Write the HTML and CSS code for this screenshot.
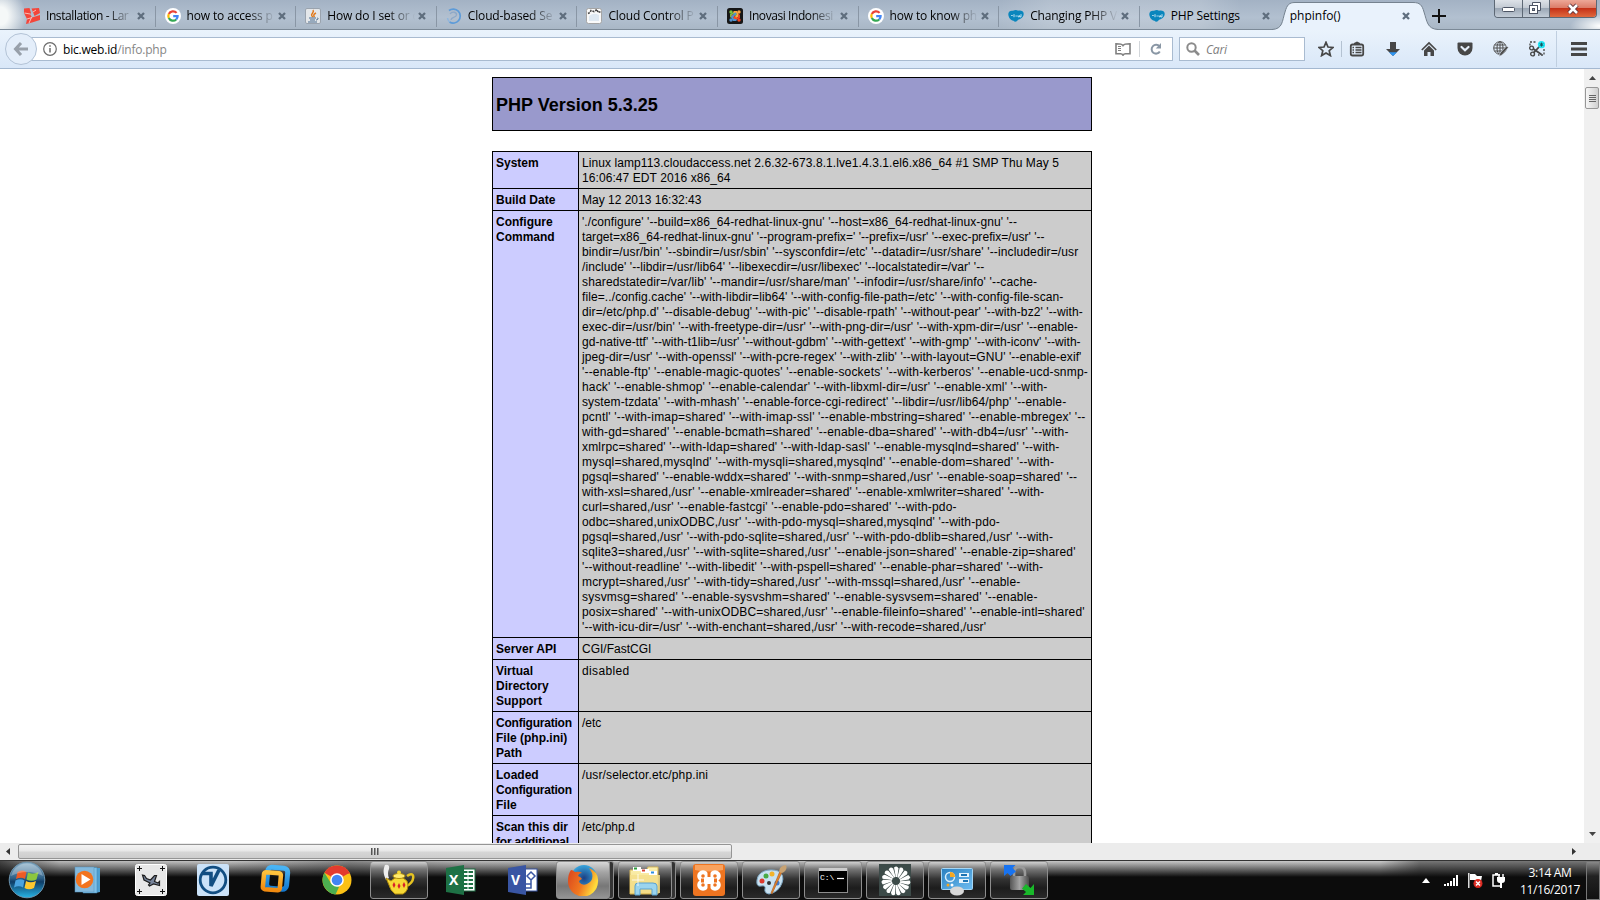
FILE: index.html
```html
<!DOCTYPE html>
<html lang="id">
<head>
<meta charset="utf-8">
<title>phpinfo()</title>
<link rel="stylesheet" href="styles.css">
</head>
<body>
<svg class="defs" width="0" height="0">
  <defs>
    <symbol id="google" viewBox="0 0 16 16"><circle cx="8" cy="8" r="8" fill="#fff"/><g fill="none" stroke-width="2.200"><path d="M3.800 6A4.700 4.700 0 0 1 11.600 4.900" stroke="#ea4335"/><path d="M3.800 6a4.700 4.700 0 0 0 0 4" stroke="#fbbc05"/><path d="M3.800 10a4.700 4.700 0 0 0 7.400 1.500" stroke="#34a853"/><path d="M11.200 11.500A4.700 4.700 0 0 0 12.600 8.200H8.200" stroke="#4285f4"/></g></symbol>
    <symbol id="cloud" viewBox="0 0 16 16"><path d="M.3 6C.3 3.200 3 2.200 5 2.800c2-1.200 4-1 5 0 2.500-.8 5.700.2 5.700 3 0 3.400-3 5.400-5.700 5.900C9 13.500 7 14.500 5.500 12.800 2.500 12.200.3 9.300.3 6z" fill="#0a86bd"/><path d="M3.200 7.500h1.500M6 6.200v3M7.500 8h1.300M10 7.300v1.500h1.500V7.300M13 6.200v2.700h-1" stroke="#d8eff9" stroke-width=".9" fill="none"/></symbol>
    <symbol id="x" viewBox="0 0 8 8"><path d="M1 1l6 6M7 1L1 7" stroke="#5f6e7e" stroke-width="2.300"/></symbol>
    <linearGradient id="orb" x2="0" y2="1"><stop offset="0" stop-color="#8fb4cc"/><stop offset=".45" stop-color="#2d5f86"/><stop offset=".55" stop-color="#0f3c66"/><stop offset="1" stop-color="#27b5e6"/></linearGradient>
    <linearGradient id="vm" x2="0" y2="1"><stop offset="0" stop-color="#49b4f5"/><stop offset="1" stop-color="#1379cf"/></linearGradient>
    <linearGradient id="org" x2="0" y2="1"><stop offset="0" stop-color="#ffc23c"/><stop offset="1" stop-color="#f08a10"/></linearGradient>
    <radialGradient id="fx"><stop offset="0" stop-color="#1c3f83"/><stop offset="1" stop-color="#37a4dc"/></radialGradient>
    <linearGradient id="fox" x2="1" y2=".4"><stop offset="0" stop-color="#d9411e"/><stop offset=".6" stop-color="#f07a20"/><stop offset="1" stop-color="#ffdb3c"/></linearGradient>
    <linearGradient id="fold" x2="0" y2="1"><stop offset="0" stop-color="#fdf3b4"/><stop offset="1" stop-color="#edcf6b"/></linearGradient>
    <linearGradient id="panel" x2="1" y2="1"><stop offset="0" stop-color="#2a80c0"/><stop offset="1" stop-color="#6ebcf0"/></linearGradient>
    <linearGradient id="steel"><stop offset="0" stop-color="#555"/><stop offset=".5" stop-color="#a5a5a5"/><stop offset="1" stop-color="#4c4c4c"/></linearGradient>
  </defs>
</svg>

<header class="tabstrip">
  <div class="tab tight"><svg class="fav" viewBox="0 0 16 16"><path d="M0 .5L5.500 0 7 5l-1 1 2 3.500L16 7v5l-8 2.500L2 16l1-5L0 5z M7.500.5L15 0l1 5-5.500 3z" fill="#f4453a"/><path d="M.5 5l5.500 1M3 11l5-1.500M7.500 9.500L5 15M9 4l3-2" stroke="#ffd9d3" fill="none" stroke-width=".8"/></svg><span class="label">Installation - Lar</span><svg class="close"><use href="#x"/></svg></div>
  <div class="tab"><svg class="fav"><use href="#google"/></svg><span class="label">how to access p</span><svg class="close"><use href="#x"/></svg></div>
  <div class="tab"><svg class="fav" viewBox="0 0 16 16"><rect x=".5" y=".5" width="15" height="15" rx="1.500" fill="#e4e7ea" stroke="#9aa3ae"/><path d="M8 9c-4-3 2-4 0-7M9.500 9C8 7 9 6 11 5" stroke="#e07a1e" stroke-width="1.500" fill="none"/><path d="M4 10h7M5 12h5M3 14h9M12 10c2 0 1 2-1 2" stroke="#4b6d8f" fill="none"/></svg><span class="label">How do I set or c</span><svg class="close"><use href="#x"/></svg></div>
  <div class="tab"><svg class="fav" viewBox="0 0 16 16"><g fill="none"><path d="M3 2.500a7 7 0 1 1 .5 11.500" stroke="#5d9bd8" stroke-width="1.700"/><path d="M3.500 14a7 7 0 0 1-2-4" stroke="#8fb6de" stroke-width="1.500"/><path d="M4 6c2-3 7-2 6.500 1S5 9 5 12" stroke="#8ea9c8" stroke-width="1.300"/></g></svg><span class="label">Cloud-based Se</span><svg class="close"><use href="#x"/></svg></div>
  <div class="tab"><svg class="fav" viewBox="0 0 16 16"><rect x=".5" y=".5" width="15" height="15" rx="2" fill="#fafafa" stroke="#a5a5a5"/><path d="M2 5.500l2-1 1-2 3 1 3-2 1 3 3-1" stroke="#444" stroke-dasharray="2 1" stroke-width="1.600" fill="none"/><path d="M3 8q5-4 10-1v6H3z" fill="#dfe9f2"/></svg><span class="label">Cloud Control P</span><svg class="close"><use href="#x"/></svg></div>
  <div class="tab tight"><svg class="fav" viewBox="0 0 16 16"><rect width="16" height="16" rx="2.500" fill="#161616"/><g fill="none" stroke-width="1.900"><path d="M4 9.500V6.500L7 5l4 4" stroke="#7ac143"/><path d="M6.500 4h3L11 7l-4 4" stroke="#f9a541"/><path d="M12 6.500v3L9 11 5 7" stroke="#f44321"/><path d="M9.500 12h-3L5 9l4-4" stroke="#5091cd"/></g><circle cx="4" cy="4" r="1.700" fill="#7ac143"/><circle cx="12" cy="4" r="1.700" fill="#f9a541"/><circle cx="12" cy="12" r="1.700" fill="#f44321"/><circle cx="4" cy="12" r="1.700" fill="#5091cd"/></svg><span class="label">Inovasi Indonesi</span><svg class="close"><use href="#x"/></svg></div>
  <div class="tab"><svg class="fav"><use href="#google"/></svg><span class="label">how to know ph</span><svg class="close"><use href="#x"/></svg></div>
  <div class="tab"><svg class="fav"><use href="#cloud"/></svg><span class="label">Changing PHP V</span><svg class="close"><use href="#x"/></svg></div>
  <div class="tab last"><svg class="fav"><use href="#cloud"/></svg><span class="label">PHP Settings</span><svg class="close"><use href="#x"/></svg></div>
  <div class="tab active">
    <svg class="shape" viewBox="0 0 166 30"><path d="M0 29.500C11 29 10 21 13 12 15 5 17 2.500 23 2.500H141C148 2.500 150 5 152 12 155 21 155 29 166 29.500V31H0z" fill="#e9f2fc" stroke="#75828f"/></svg>
    <span class="label">phpinfo()</span><svg class="close"><use href="#x"/></svg>
  </div>
  <svg class="plus" viewBox="0 0 14 14"><path d="M7 0v14M0 7h14" stroke="#111" stroke-width="2"/></svg>
  <div class="winbtns">
    <span class="wb min"><svg width="13" height="6"><rect x=".5" y=".5" width="12" height="4" rx="1" fill="#fff" stroke="#4d5565"/></svg></span>
    <span class="wb max"><svg width="13" height="13"><path d="M3.500 3V.5h8v8H9" fill="#fff" stroke="#4d5565"/><rect x=".5" y="3.500" width="8" height="8" fill="#fff" stroke="#4d5565"/><rect x="3.500" y="6.500" width="2" height="2" fill="#9aa5b3" stroke="#4d5565"/></svg></span>
    <span class="wb cls"><svg width="13" height="12"><path d="M2 2l8 8M10 2L2 10" stroke="#5b3038" stroke-width="4.500"/><path d="M2 2l8 8M10 2L2 10" stroke="#fff" stroke-width="2.600"/></svg></span>
  </div>
</header>

<nav class="toolbar">
  <span class="back"><svg width="16" height="14"><path d="M8 1L2.500 7 8 13M3 7h12" stroke="#98a0aa" stroke-width="3" fill="none"/></svg></span>
  <div class="urlbar">
    <svg class="info" viewBox="0 0 14 14"><circle cx="7" cy="7" r="6.300" fill="none" stroke="#6b6b6b" stroke-width="1.200"/><path d="M7 6v4.500M7 3.200v1.600" stroke="#6b6b6b" stroke-width="1.500"/></svg>
    <span class="url">bic.web.id<span class="path">/info.php</span></span>
    <svg class="reader" viewBox="0 0 16 13"><path d="M8 2.500C7 1 5 .8 1 .8v10h4.500c1.300 0 2 .3 2.500 1.500.5-1.200 1.200-1.500 2.500-1.500H15V.8C11 .8 9 1 8 2.500z" fill="none" stroke="#7f7f7f" stroke-width="1.600"/><path d="M3 3.500h3M3 5.500h3M3 7.500h3" stroke="#7f7f7f"/></svg>
    <span class="usep"></span>
    <svg class="reload" viewBox="0 0 12 12"><path d="M9.500 3.500A4.400 4.400 0 1 0 9.800 8.500" fill="none" stroke="#8a97a5" stroke-width="2"/><path d="M11 0v5.500H5.800z" fill="#8a97a5"/></svg>
  </div>
  <div class="search"><svg width="14" height="14"><circle cx="5.500" cy="5.500" r="4.200" fill="none" stroke="#8b8b8b" stroke-width="2"/><path d="M8.500 8.500l4.500 4.500" stroke="#8b8b8b" stroke-width="2.600"/></svg><span>Cari</span></div>
  <div class="tools">
    <svg viewBox="0 0 16 16"><path d="M8 1.300l2 4.700 5 .4-3.800 3.300 1.200 4.900L8 12l-4.400 2.600 1.200-4.900L1 6.400 6 6z" fill="none" stroke="#474747" stroke-width="1.700"/></svg>
    <i class="tsep"></i>
    <svg viewBox="0 0 16 16"><rect x="1.800" y="3.500" width="12.400" height="11" rx="1.800" fill="none" stroke="#474747" stroke-width="1.800"/><path d="M5 3V2l3-1.500L11 2v1z" fill="#474747"/><path d="M3.500 6.500h1.500M6.500 6.500h6M3.500 9h1.500M6.500 9h6M3.500 11.500h1.500M6.500 11.500h6" stroke="#474747" stroke-width="1.300"/></svg>
    <svg viewBox="0 0 16 16"><path d="M5 1h6v7h4l-7 7-7-7h4z" fill="#474747"/><path d="M4 11.300h8L8 15z" fill="#2d96f5"/></svg>
    <svg viewBox="0 0 16 16"><path d="M.8 9L8 2l7.200 7" fill="none" stroke="#474747" stroke-width="1.700"/><path d="M3 9.500l5-5 5 5V15H9.500v-4h-3v4H3z" fill="#474747"/></svg>
    <svg viewBox="0 0 16 16"><path d="M1.500 1.500h13q1 0 1 1V7a7.500 7.500 0 0 1-15 0V2.500q0-1 1-1z" fill="#474747"/><path d="M4.500 6L8 9.300 11.500 6" fill="none" stroke="#e6effa" stroke-width="2.200" stroke-linecap="round"/></svg>
    <svg viewBox="0 0 16 16"><g fill="none" stroke="#4e4e4e"><circle cx="7" cy="7" r="6.300"/><ellipse cx="7" cy="7" rx="3" ry="6.300"/><path d="M7 .7v12.600M1 7h12M1.600 4h10.800M1.600 10h8"/></g><path d="M15.500 6.500L9 14l-3 1.500L7 12l6.500-7z" fill="#4e4e4e" stroke="#e1edfa" stroke-width=".6"/></svg>
    <svg viewBox="0 0 16 16"><path d="M1 4.500V1h7M15 8v6H9" fill="none" stroke="#474747" stroke-width="1.300" stroke-dasharray="2 1.500"/><circle cx="2.600" cy="7" r="1.900" fill="none" stroke="#474747" stroke-width="1.400"/><circle cx="3.600" cy="13" r="1.900" fill="none" stroke="#474747" stroke-width="1.400"/><path d="M4.500 8l8 5.500M4.500 11.800L11 5" stroke="#474747" stroke-width="1.800"/><circle cx="12.500" cy="3.600" r="3.600" fill="#1ee6f5"/><path d="M12.500 1.600v4M10.700 2.600l3.600 2M14.300 2.600l-3.600 2" stroke="#16555e"/></svg>
  </div>
  <svg class="menu" width="16" height="14"><path d="M0 1.500h16M0 7h16M0 12.500h16" stroke="#474747" stroke-width="2.800"/></svg>
</nav>

<div class="view">
  <main class="page">
    <div class="banner"><h1>PHP Version 5.3.25</h1></div>
    <table class="info-table">
      <colgroup><col class="c1"><col></colgroup>
      <tr><th>System</th><td><span class="s2">Linux lamp113.cloudaccess.net 2.6.32-673.8.1.lve1.4.3.1.el6.x86_64 #1 SMP Thu May 5</span><span class="s2">16:06:47 EDT 2016 x86_64</span></td></tr>
      <tr><th>Build Date</th><td>May 12 2013 16:32:43</td></tr>
      <tr><th>Configure Command</th><td>
<span class="s2">'./configure' '--build=x86_64-redhat-linux-gnu' '--host=x86_64-redhat-linux-gnu' '--</span>
<span class="s1">target=x86_64-redhat-linux-gnu' '--program-prefix=' '--prefix=/usr' '--exec-prefix=/usr' '--</span>
<span class="s4">bindir=/usr/bin' '--sbindir=/usr/sbin' '--sysconfdir=/etc' '--datadir=/usr/share' '--includedir=/usr</span>
<span class="s2">/include' '--libdir=/usr/lib64' '--libexecdir=/usr/libexec' '--localstatedir=/var' '--</span>
<span class="s5">sharedstatedir=/var/lib' '--mandir=/usr/share/man' '--infodir=/usr/share/info' '--cache-</span>
<span class="s3">file=../config.cache' '--with-libdir=lib64' '--with-config-file-path=/etc' '--with-config-file-scan-</span>
<span class="s3">dir=/etc/php.d' '--disable-debug' '--with-pic' '--disable-rpath' '--without-pear' '--with-bz2' '--with-</span>
<span class="s2">exec-dir=/usr/bin' '--with-freetype-dir=/usr' '--with-png-dir=/usr' '--with-xpm-dir=/usr' '--enable-</span>
<span class="s1">gd-native-ttf' '--with-t1lib=/usr' '--without-gdbm' '--with-gettext' '--with-gmp' '--with-iconv' '--with-</span>
<span class="s2">jpeg-dir=/usr' '--with-openssl' '--with-pcre-regex' '--with-zlib' '--with-layout=GNU' '--enable-exif'</span>
<span class="s6">'--enable-ftp' '--enable-magic-quotes' '--enable-sockets' '--with-kerberos' '--enable-ucd-snmp-</span>
<span class="s5">hack' '--enable-shmop' '--enable-calendar' '--with-libxml-dir=/usr' '--enable-xml' '--with-</span>
<span class="s3">system-tzdata' '--with-mhash' '--enable-force-cgi-redirect' '--libdir=/usr/lib64/php' '--enable-</span>
<span class="s6">pcntl' '--with-imap=shared' '--with-imap-ssl' '--enable-mbstring=shared' '--enable-mbregex' '--</span>
<span class="s6">with-gd=shared' '--enable-bcmath=shared' '--enable-dba=shared' '--with-db4=/usr' '--with-</span>
<span class="s6">xmlrpc=shared' '--with-ldap=shared' '--with-ldap-sasl' '--enable-mysqlnd=shared' '--with-</span>
<span class="s7">mysql=shared,mysqlnd' '--with-mysqli=shared,mysqlnd' '--enable-dom=shared' '--with-</span>
<span class="s6">pgsql=shared' '--enable-wddx=shared' '--with-snmp=shared,/usr' '--enable-soap=shared' '--</span>
<span class="s5">with-xsl=shared,/usr' '--enable-xmlreader=shared' '--enable-xmlwriter=shared' '--with-</span>
<span class="s6">curl=shared,/usr' '--enable-fastcgi' '--enable-pdo=shared' '--with-pdo-</span>
<span class="s5">odbc=shared,unixODBC,/usr' '--with-pdo-mysql=shared,mysqlnd' '--with-pdo-</span>
<span class="s6">pgsql=shared,/usr' '--with-pdo-sqlite=shared,/usr' '--with-pdo-dblib=shared,/usr' '--with-</span>
<span class="s6">sqlite3=shared,/usr' '--with-sqlite=shared,/usr' '--enable-json=shared' '--enable-zip=shared'</span>
<span class="s4">'--without-readline' '--with-libedit' '--with-pspell=shared' '--enable-phar=shared' '--with-</span>
<span class="s5">mcrypt=shared,/usr' '--with-tidy=shared,/usr' '--with-mssql=shared,/usr' '--enable-</span>
<span class="s7">sysvmsg=shared' '--enable-sysvshm=shared' '--enable-sysvsem=shared' '--enable-</span>
<span class="s5">posix=shared' '--with-unixODBC=shared,/usr' '--enable-fileinfo=shared' '--enable-intl=shared'</span>
<span class="s4">'--with-icu-dir=/usr' '--with-enchant=shared,/usr' '--with-recode=shared,/usr'</span></td></tr>
      <tr><th>Server API</th><td>CGI/FastCGI</td></tr>
      <tr><th>Virtual<br>Directory<br>Support</th><td><span class="s8">disabled</span></td></tr>
      <tr><th><span class="n">Configuration</span>File (php.ini)<br>Path</th><td>/etc</td></tr>
      <tr><th>Loaded<br><span class="n">Configuration</span>File</th><td><span class="s4">/usr/selector.etc/php.ini</span></td></tr>
      <tr><th>Scan this dir<br><span class="n">for additional</span>.ini files</th><td>/etc/php.d</td></tr>
    </table>
  </main>
  <aside class="vscroll">
    <svg width="7" height="4"><path d="M0 4l3.500-4L7 4z" fill="#444"/></svg>
    <span class="vthumb"><i></i><i></i><i></i><i></i></span>
    <svg class="down" width="7" height="4"><path d="M0 0l3.500 4L7 0z" fill="#444"/></svg>
  </aside>
</div>
<div class="hscroll">
  <svg width="4" height="7"><path d="M4 0L0 3.500 4 7z" fill="#333"/></svg>
  <span class="hthumb"><i></i><i></i><i></i></span>
  <svg class="right" width="4" height="7"><path d="M0 0l4 3.500L0 7z" fill="#333"/></svg>
</div>

<footer class="taskbar">
  <span class="start"><svg width="38" height="38" viewBox="0 0 38 38"><circle cx="19" cy="19" r="17.800" fill="url(#orb)" stroke="#6c93ad"/><path d="M9.500 11q5-3 9 0l-1.500 7q-4-2.500-9 0z" fill="#ee5a24"/><path d="M20 11.500q4.500 2.500 10.500-.5L28.500 18.500q-5 2.500-10 0z" fill="#8cc63f"/><path d="M7.500 19.500q5-2.500 9 0l-1.500 7q-4-2.500-9 0z" fill="#4aa3e0"/><path d="M18 20q4.500 2.500 10 0l-2 7q-5 2.500-9.500 0z" fill="#fdc82f"/><path d="M3 15a16.500 16.500 0 0 1 32 0q-16-8-32 0z" fill="#fff" opacity=".28"/></svg></span>
  <div class="slots">
  <span class="slot"><svg viewBox="0 0 32 32"><path d="M12 4h15v24l-5 1z" fill="#4f9fcf"/><path d="M10 3.500h14V29H10z" fill="#7fc0e6" stroke="#3c86b4" stroke-width=".5"/><rect x="2" y="3" width="19" height="25" fill="#84b9dc" stroke="#5595c0" stroke-width=".5"/><circle cx="11.500" cy="15.500" r="8.800" fill="#f2741f"/><path d="M8.500 10l9 5.500-9 5.500z" fill="#fff"/></svg></span>
  <span class="slot"><svg viewBox="0 0 32 32"><rect x=".5" y=".5" width="31" height="31" rx="2" fill="#e8e8e8" stroke="#fff"/><path d="M2 4.500h5M4.500 2v5M25 4.500h5M27.500 2v5M2 27.500h5M4.500 25v5M25 27.500h5M27.500 25v5" stroke="#111"/><path d="M7.500 11l2 .5 2 3 4 1.500 4-4.500h2l-2 6 3.500 1.500 1.500-1.500v4l-6-1.500-4 2-1-1 1.500-2-6-3z" fill="#76839a" stroke="#1e1e1e" stroke-width="1.200"/></svg></span>
  <span class="slot"><svg viewBox="0 0 32 32"><rect width="32" height="32" rx="2" fill="#cbe2f8"/><circle cx="16" cy="16" r="12.800" fill="none" stroke="#124e82" stroke-width="2.800"/><path d="M5 9.500h9V22L22 6" fill="none" stroke="#124e82" stroke-width="3.600"/></svg></span>
  <span class="slot"><svg viewBox="0 0 32 32"><rect x="8" y="3.500" width="20" height="21" rx="4" fill="none" stroke="url(#vm)" stroke-width="5" transform="rotate(5 16 16)"/><rect x="4.500" y="9" width="17" height="17" rx="2" fill="none" stroke="url(#org)" stroke-width="4.500" transform="rotate(5 16 16)"/></svg></span>
  <span class="slot"><svg viewBox="0 0 32 32"><circle cx="16" cy="16" r="14.500" fill="#fbc116"/><path d="M16 16L3.400 8.800A14.500 14.500 0 0 1 28.600 8.800z" fill="#e33b2e"/><path d="M3.400 8.800L10.500 20l7.500 3-3.500 7.400A14.500 14.500 0 0 1 3.400 8.800z" fill="#4caf50"/><path d="M16 9.500h13a14.500 14.500 0 0 0-.4-.7H16z" fill="#e33b2e"/><circle cx="16" cy="16" r="6.800" fill="#fff"/><circle cx="16" cy="16" r="5.300" fill="#4285f4"/></svg></span>
  <span class="slot btn"><svg viewBox="0 0 32 32"><path d="M3 16C0 9 0 6 2 1q5-1 4 4-2 4 0 9z" fill="#eee"/><path d="M24 12c9-7 8 8-1 10" fill="none" stroke="#e5c321" stroke-width="2.500"/><path d="M3 14l5 3q8-8 16 0 3 9-4 13h-8q-5-4-6-9z" fill="#f7d936" stroke="#b28c0c"/><ellipse cx="16" cy="12" rx="6" ry="2.500" fill="#ffeb70" stroke="#b28c0c"/><circle cx="16" cy="8.500" r="2" fill="#f7d936"/><path d="M11 18l1.500 3-1.500 3-1.500-3zM16 19l1.500 3-1.500 3-1.500-3zM21 18l1.500 3-1.500 3-1.500-3z" fill="#d8202a"/></svg></span>
  <span class="slot"><svg viewBox="0 0 32 32"><rect x="15" y="5" width="15" height="22" fill="#fff" stroke="#1e7145"/><path d="M18 8h10M18 12h10M18 16h10M18 20h10M18 24h10" stroke="#1e7145" stroke-width="2"/><path d="M23 6v20" stroke="#fff"/><path d="M1 4l18-3v30L1 28z" fill="#1e7145"/></svg><b class="letter">X</b></span>
  <span class="slot"><svg viewBox="0 0 32 32"><rect x="15" y="5" width="15" height="22" fill="#fff" stroke="#3955a3"/><path d="M24 8l4 4-4 4-4-4zM24 16v4M18 20h6v4h-5" stroke="#3955a3" stroke-width="1.500" fill="none"/><path d="M1 4l18-3v30L1 28z" fill="#3955a3"/></svg><b class="letter">V</b></span>
  <span class="slot btn stack lit"><svg viewBox="0 0 32 32"><circle cx="17" cy="14" r="13" fill="url(#fx)"/><path d="M4 6q2 0 4 2 5-1 7 1-3 0-4 3 3 1 4 3-3 1-3 3 3 4 8 2 7-3 5-11l-3-5q10 4 9 14A15 15 0 0 1 1 17Q1 10 4 6z" fill="url(#fox)"/></svg></span>
  <span class="slot btn stack"><svg viewBox="0 0 32 32"><path d="M1 6h10l2 2h4l2-5h10v27H1z" fill="url(#fold)" stroke="#d6b75a"/><path d="M4 3h8v4H4z" fill="#fff"/><path d="M5 3.500h3v2H5z" fill="#2b9d3a"/><path d="M12 5h8v4h-8z" fill="#fff"/><path d="M13 5.500h3v2h-3z" fill="#d8432e"/><path d="M20 7h8v4h-8z" fill="#fff"/><path d="M22 7.500h3v2h-3z" fill="#2d8ee0"/><path d="M1 11h30v18H1z" fill="#f5df8c" opacity=".85"/><path d="M6 31v-9q0-3 3-3h15q4 0 4 3v9h-5v-6H11v6z" fill="#9ad4ee" stroke="#5aa2cf"/><path d="M9 10v12M3 16h12" stroke="#fff" stroke-width=".8"/></svg></span>
  <span class="slot btn"><svg viewBox="0 0 32 32"><rect width="32" height="32" rx="3" fill="#ee7420"/><path d="M2 1h28v5Q16 9 2 6z" fill="#f9a25e"/><g fill="none" stroke="#fff" stroke-width="4"><circle cx="10" cy="12" r="3.800"/><circle cx="22" cy="12" r="3.800"/><circle cx="10" cy="21" r="3.800"/><circle cx="22" cy="21" r="3.800"/></g><path d="M13 13h6v7h-6z" fill="#fff"/><path d="M14.500 8h3v5h-3zM14.500 20h3v6h-3zM8 14.500h3v4H8zM21 14.500h3v4h-3z" fill="#ee7420"/></svg></span>
  <span class="slot btn"><svg viewBox="0 0 32 32"><path d="M2 16C3 7 14 4 23 7q7 4 4 12-3 9-13 11-5-1-4-5t-4-3-4-6z" fill="#c9e2f1" stroke="#7ea7c3"/><circle cx="7" cy="17" r="2.500" fill="#dc3b2f"/><circle cx="11" cy="12" r="2.500" fill="#48ab46"/><circle cx="17" cy="10" r="2.500" fill="#f3b32b"/><circle cx="14" cy="19" r="2" fill="#333"/><circle cx="22" cy="19" r="2.500" fill="#3f7dd0"/><path d="M17 30l-1-1 9-22 2 1z" fill="#e7852b" stroke="#a4551a" stroke-width=".6"/><path d="M24 8q0-6 7-7 2 5-4 8z" fill="#c8a272"/></svg></span>
  <span class="slot btn"><svg viewBox="0 0 32 32"><rect x="1.500" y="3.500" width="29" height="25" fill="#000" stroke="#8d8d8d"/><path d="M2 4h28v3H2z" fill="#ccc"/><path d="M20 14.500h7" stroke="#fff" stroke-width="1.200"/></svg><span class="prompt">C:\</span></span>
  <span class="slot btn"><svg viewBox="0 0 32 32"><rect width="32" height="32" fill="#3c4a48"/><g fill="#fff"><path id="p" d="M16.800 13L15 3.500Q18 1 19.500 4.500L18.300 13z"/><use href="#p" transform="rotate(24 17 17)"/><use href="#p" transform="rotate(48 17 17)"/><use href="#p" transform="rotate(72 17 17)"/><use href="#p" transform="rotate(96 17 17)"/><use href="#p" transform="rotate(120 17 17)"/><use href="#p" transform="rotate(144 17 17)"/><use href="#p" transform="rotate(168 17 17)"/><use href="#p" transform="rotate(192 17 17)"/><use href="#p" transform="rotate(216 17 17)"/><use href="#p" transform="rotate(240 17 17)"/><use href="#p" transform="rotate(264 17 17)"/><use href="#p" transform="rotate(288 17 17)"/><use href="#p" transform="rotate(312 17 17)"/><use href="#p" transform="rotate(336 17 17)"/></g></svg></span>
  <span class="slot btn"><svg viewBox="0 0 32 32"><rect x=".5" y="4.500" width="31" height="21" rx="1" fill="url(#panel)" stroke="#a5d6f5"/><circle cx="9" cy="13" r="4.500" fill="none" stroke="#d6edfb" stroke-width="1.500"/><path d="M9 13V8q5 0 5 5z" fill="#f6a821"/><path d="M18 9h10v4H18zM18 15h10v4H18z" fill="#e6f4fd"/><path d="M20 11h6M22 17h5" stroke="#1c74b4" stroke-width="2"/><circle cx="7" cy="21" r="1.500" fill="#f6a821"/><circle cx="11" cy="21" r="1.500" fill="#fff"/><ellipse cx="16" cy="27" rx="7" ry="4.500" fill="#d8d8d8"/></svg></span>
  <span class="slot btn"><svg viewBox="0 0 32 32"><path d="M11 14V9q0-6 5.500-6T22 9v5" fill="none" stroke="#9a9a9a" stroke-width="2.600"/><rect x="7" y="12" width="19" height="14" rx="2" fill="url(#steel)"/><path d="M1 1h11.500L9.500 4 13 7.500 7.500 12 4.500 9 1 12z" fill="#1873f0"/><path d="M31 31H20l3-3-4-3.500 4-4.500 4.500 4 3.500-4z" fill="#19b82a"/></svg></span>
  </div>
  <div class="tray">
    <svg width="8" height="5"><path d="M0 5l4-5 4 5z" fill="#fff"/></svg>
    <svg class="sig" width="15" height="11"><path d="M1 9v2M4 8v3M7 6v5M10 3v8M13 0v11" stroke="#fff" stroke-width="2"/></svg>
    <svg class="flag" width="15" height="15"><path d="M.8 0v15" stroke="#fff" stroke-width="1.300"/><path d="M2 1h5l2 2h5l-1 5H8L7 7H2z" fill="#fff"/><circle cx="10" cy="10.500" r="4.500" fill="#dc2b22"/><path d="M8 8.500l4 4M12 8.500l-4 4" stroke="#fff" stroke-width="1.500"/></svg>
    <svg class="pow" width="14" height="15"><path d="M3 2h5M3 2H1v11h7" fill="none" stroke="#fff" stroke-width="1.500"/><path d="M3 0h3v2H3z" fill="#fff"/><path d="M5 4h8v3q0 3-3 3v5H8v-5q-3 0-3-3z" fill="#fff"/><path d="M7 4V1M11 4V1" stroke="#fff" stroke-width="1.500"/></svg>
    <div class="clock"><span>3:14 AM</span><span>11/16/2017</span></div>
    <span class="desk"></span>
  </div>
</footer>
</body>
</html>
```
FILE: styles.css
```css
* { box-sizing: border-box; }
body {
  margin: 0;
  width: 1600px;
  height: 900px;
  overflow: hidden;
  display: flex;
  flex-direction: column;
  background: #fff;
  font-family: "Open Sans", "Noto Sans", sans-serif;
  font-size: 12px;
  color: #000;
}
svg { display: block; flex: none; }
.defs { position: absolute; }

/* Tab strip */
.tabstrip {
  height: 30px;
  flex: none;
  display: flex;
  padding-left: 15px;
  border-bottom: 1px solid #7b8997;
  background:
    radial-gradient(ellipse 26px 30px at 0 16px, #f5f8f8 30%, rgba(245,248,248,0)),
    radial-gradient(ellipse 30px 12px at 1600px 26px, #fff, rgba(255,255,255,0)),
    linear-gradient(90deg, rgba(255,255,255,0) 1000px, rgba(255,255,255,.16) 1050px, rgba(255,255,255,.16) 1200px, rgba(255,255,255,0) 1240px),
    linear-gradient(#a3b2c4, #b2c0d0 60%, #a9b7c6);
}
.tab {
  width: 140.6px;
  flex: none;
  height: 30px;
  display: flex;
  align-items: center;
  padding: 2px 0 0 9px;
  background: linear-gradient(#8996a5, #8996a5) right 6px / 1px 21px no-repeat;
}
.fav { width: 16px; height: 16px; }
.tab .label {
  width: 88px;
  margin-left: 6px;
  white-space: nowrap;
  letter-spacing: -.15px;
  line-height: 18px;
  -webkit-mask-image: linear-gradient(90deg, #000 60px, transparent 88px);
  mask-image: linear-gradient(90deg, #000 60px, transparent 88px);
}
.tab.tight .label { letter-spacing: -.42px; }
.close { width: 8px; height: 8px; margin-left: 3px; }
.tab.last { background: none; width: 132px; }
.tab.last .label, .tab.active .label { -webkit-mask-image: none; mask-image: none; }
.tab.active {
  position: relative;
  background: none;
  width: 166px;
  padding-left: 12px;
}
.tab.active .shape { position: absolute; left: 0; top: 0; width: 166px; height: 30px; }
.tab.active .label { position: relative; width: 109px; letter-spacing: 0; }
.tab.active .close { position: relative; }
.plus { width: 14px; height: 14px; margin: 9px 0 0 -6px; }
.winbtns {
  margin: 0 3px 0 auto;
  display: flex;
  width: 103px;
  height: 18px;
  border: 1px solid #5d6875;
  border-top: 0;
  border-radius: 0 0 4px 4px;
  overflow: hidden;
}
.wb {
  display: flex;
  align-items: center;
  justify-content: center;
  background: linear-gradient(#dde2e8, #c3cad3 45%, #9ba7b5 50%, #c3ccd7);
  border-right: 1px solid #5d6875;
}
.min { width: 28px; padding-top: 3px; }
.max { width: 27px; padding-right: 1px; }
.cls { flex: 1; border: 0; background: linear-gradient(#eda898, #dc7d69 45%, #c53218 50%, #e0683e); }

/* Navigation toolbar */
.toolbar {
  height: 39px;
  flex: none;
  display: flex;
  align-items: center;
  background: linear-gradient(#eaf3fc, #d9e7f8);
  border-bottom: 1px solid #a4b8d0;
}
.back {
  position: relative;
  z-index: 1;
  width: 32px;
  height: 32px;
  margin-left: 5px;
  border: 1px solid #b3c3d6;
  border-radius: 50%;
  background: #e4eefa;
  display: flex;
  align-items: center;
  justify-content: center;
}
.urlbar {
  width: 1147px;
  height: 24px;
  margin-left: -11px;
  border: 1px solid #a9bbd0;
  background: #fff;
  display: flex;
  align-items: center;
  padding-left: 16px;
}
.info { width: 14px; height: 14px; }
.url { margin-left: 6px; font-size: 12px; letter-spacing: -.2px; width: 1052px; padding-top: 1px; }
.path { color: #868686; }
.reader { width: 16px; height: 13px; }
.usep { width: 1px; height: 16px; background: #d2d6da; margin: 0 10px 0 8px; }
.reload { width: 12px; height: 12px; }
.search {
  width: 126px;
  height: 24px;
  margin-left: 6px;
  border: 1px solid #a9bbd0;
  background: #fff;
  display: flex;
  align-items: center;
  gap: 6px;
  padding-left: 6px;
  color: #7d7d7d;
  font-style: italic;
  letter-spacing: -.2px;
}
.tools { display: flex; gap: 20px; margin-left: 13px; width: 239px; align-items: center; border-right: 1px solid #c0cfe0; height: 36px; }
.tools svg { width: 16px; height: 16px; }
.tsep { width: 1px; height: 16px; background: #b4c2d2; margin: 0 -13px; }
.menu { margin-left: 14px; }

/* phpinfo document */
.view { flex: none; height: 774px; display: flex; overflow: hidden; }
.page {
  width: 1584px;
  padding-top: 8px;
  display: flex;
  flex-direction: column;
  align-items: center;
  font-family: "Liberation Sans", Arial, sans-serif;
}
.banner {
  width: 600px;
  height: 54px;
  flex: none;
  border: 1px solid #000;
  background: #9999cc;
  display: flex;
  align-items: center;
  padding: 3px 3px 0;
}
h1 { margin: 0; font-size: 18px; line-height: 21px; }
.info-table {
  width: 600px;
  margin-top: 20px;
  border-collapse: collapse;
  table-layout: fixed;
  font-size: 12px;
  line-height: 15px;
}
.c1 { width: 86px; }
th, td { border: 1px solid #000; padding: 4px 3px 2px; vertical-align: top; text-align: left; }
th { background: #ccccff; }
td { background: #cccccc; }
td span, th span { display: block; white-space: nowrap; }
.n { letter-spacing: -.22px; }
.s1 { letter-spacing: .045px; }
.s2 { letter-spacing: .08px; }
.s3 { letter-spacing: .105px; }
.s4 { letter-spacing: .135px; }
.s5 { letter-spacing: .155px; }
.s6 { letter-spacing: .18px; }
.s7 { letter-spacing: .215px; }
.s8 { letter-spacing: .35px; }

/* Scrollbars */
.vscroll {
  width: 16px;
  background: #f0f0f0;
  display: flex;
  flex-direction: column;
  align-items: center;
  padding: 7px 0;
}
.vthumb {
  width: 14px;
  height: 22px;
  margin-top: 7px;
  border: 1px solid #979797;
  border-radius: 2px;
  background: linear-gradient(90deg, #f6f6f6, #d0d0d0);
  display: flex;
  flex-direction: column;
  justify-content: center;
  align-items: center;
  gap: 1px;
}
.vthumb i { width: 7px; height: 1px; background: #666; }
.down { margin-top: auto; }
.hscroll {
  flex: none;
  height: 17px;
  background: #ececec;
  display: flex;
  align-items: center;
  padding: 0 24px 0 6px;
}
.hthumb {
  width: 714px;
  height: 15px;
  margin-left: 8px;
  border: 1px solid #959595;
  border-radius: 2px;
  background: linear-gradient(#f4f4f4, #e8e8e8 45%, #d6d6d6 55%, #cdcdcd);
  display: flex;
  align-items: center;
  justify-content: center;
  gap: 1px;
}
.hthumb i { width: 2px; height: 7px; background: linear-gradient(90deg, #555 50%, #999 50%); }
.right { margin-left: auto; }

/* Taskbar */
.taskbar {
  height: 40px;
  flex: none;
  display: flex;
  border-top: 1px solid #333;
  background:
    linear-gradient(rgba(0,0,0,0), #0c0c0c 16px),
    linear-gradient(90deg, #444 0, #bbb 60px, #c4c4c4 230px, #888 350px, #bbb 470px, #ccc 1380px, #777 1420px, #777 1600px);
}
.start { width: 58px; padding-left: 8px; }
.slots { display: flex; padding-left: 2px; }
.slot {
  position: relative;
  width: 58px;
  height: 38px;
  margin: 0 4px 0 0;
  border: 1px solid transparent;
  border-radius: 3px;
  display: flex;
  align-items: center;
  justify-content: center;
  flex: none;
}
.slot > svg { width: 32px; height: 32px; }
.btn {
  border-color: #8d8d8d;
  background: linear-gradient(#d0d0d0, #777 7px, #333 17px, #1d1d1d 26px, #2a2a2a);
}
.lit { background: linear-gradient(#d8d8d8, #a5a5a5 10px, #777 24px, #949494); }
.stack { width: 54px; margin-right: 8px; box-shadow: 4px 0 0 -1px #333, 4px 0 0 0 #8d8d8d; }
.letter { position: absolute; left: 16px; top: 8px; color: #fff; font-size: 14px; line-height: 20px; }
.prompt { position: absolute; left: 15px; top: 11px; color: #fff; font: 8px/10px "Liberation Mono", monospace; }
.tray { margin-left: auto; display: flex; align-items: center; color: #fff; }
.sig { margin-left: 14px; }
.flag { margin-left: 9px; }
.pow { margin-left: 9px; }
.clock { width: 80px; padding: 1px 0 0 8px; display: flex; flex-direction: column; align-items: center; font-size: 12px; line-height: 17px; letter-spacing: -.35px; }
.desk { width: 14px; height: 39px; border: 1px solid #777; background: linear-gradient(#888, #222 14px, #111); }
```
